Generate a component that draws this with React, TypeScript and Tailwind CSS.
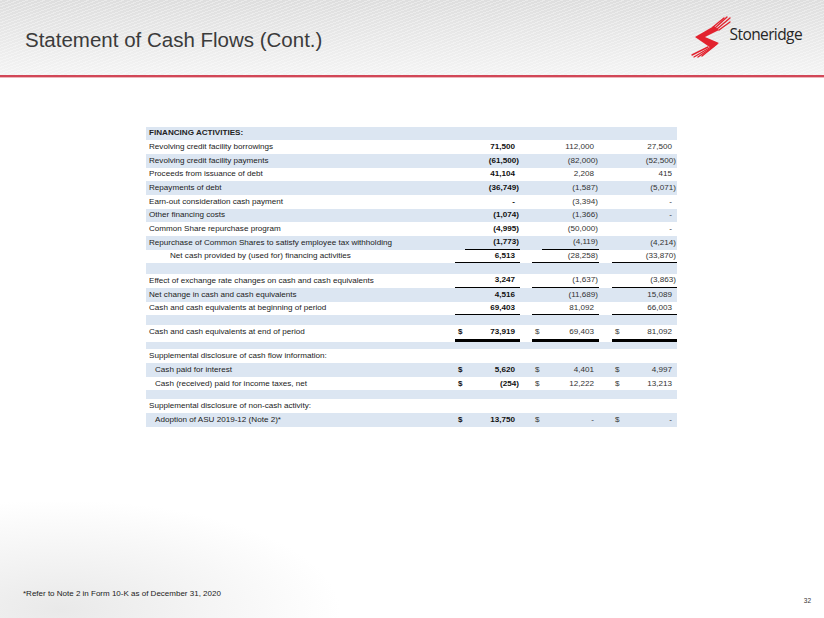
import React from 'react';

type Line = 'none' | 'thin' | 'narrow' | 'thick';

type Row = {
  label?: string;
  blue?: boolean;
  bold?: boolean;
  indent?: number;
  vals?: [string, string, string];
  dollar?: boolean;
  lines?: [Line, Line, Line];
  h?: string;
};

const rows: Row[] = [
  { label: 'FINANCING ACTIVITIES:', blue: true, bold: true },
  { label: 'Revolving credit facility borrowings', vals: ['71,500', '112,000', '27,500'] },
  { label: 'Revolving credit facility payments', blue: true, vals: ['(61,500)', '(82,000)', '(52,500)'] },
  { label: 'Proceeds from issuance of debt', vals: ['41,104', '2,208', '415'] },
  { label: 'Repayments of debt', blue: true, vals: ['(36,749)', '(1,587)', '(5,071)'] },
  { label: 'Earn-out consideration cash payment', vals: ['-', '(3,394)', '-'] },
  { label: 'Other financing costs', blue: true, vals: ['(1,074)', '(1,366)', '-'] },
  { label: 'Common Share repurchase program', vals: ['(4,995)', '(50,000)', '-'] },
  {
    label: 'Repurchase of Common Shares to satisfy employee tax withholding',
    blue: true,
    vals: ['(1,773)', '(4,119)', '(4,214)'],
    lines: ['narrow', 'narrow', 'none'],
  },
  {
    label: 'Net cash provided by (used for) financing activities',
    indent: 1,
    vals: ['6,513', '(28,258)', '(33,870)'],
    lines: ['thin', 'thin', 'thin'],
  },
  { blue: true, h: 'h-[10.8px]' },
  {
    label: 'Effect of exchange rate changes on cash and cash equivalents',
    vals: ['3,247', '(1,637)', '(3,863)'],
    lines: ['thin', 'thin', 'thin'],
  },
  { label: 'Net change in cash and cash equivalents', blue: true, vals: ['4,516', '(11,689)', '15,089'] },
  {
    label: 'Cash and cash equivalents at beginning of period',
    vals: ['69,403', '81,092', '66,003'],
    lines: ['thin', 'thin', 'thin'],
  },
  { blue: true, h: 'h-[10px]' },
  {
    label: 'Cash and cash equivalents at end of period',
    vals: ['73,919', '69,403', '81,092'],
    dollar: true,
    lines: ['thick', 'thick', 'thick'],
    h: 'h-[16.7px]',
  },
  { blue: true, h: 'h-[7.5px]' },
  { label: 'Supplemental disclosure of cash flow information:' },
  { label: 'Cash paid for interest', indent: 2, blue: true, vals: ['5,620', '4,401', '4,997'], dollar: true },
  { label: 'Cash (received) paid for income taxes, net', indent: 2, vals: ['(254)', '12,222', '13,213'], dollar: true },
  { blue: true, h: 'h-[8.9px]' },
  { label: 'Supplemental disclosure of non-cash activity:' },
  { label: 'Adoption of ASU 2019-12 (Note 2)*', indent: 2, blue: true, vals: ['13,750', '-', '-'], dollar: true },
];

const lineCls: Record<Line, string> = {
  none: '',
  thin: 'border-b border-black',
  narrow: 'border-b border-black ml-[10px]',
  thick: 'border-b-[3px] border-black',
};

const ValueCell = ({ v, dollar, line, first }: { v: string; dollar?: boolean; line: Line; first: boolean }) => {
  const paren = v.endsWith(')');
  return (
    <div className={`flex h-full items-center justify-between ${lineCls[line]} ${first ? 'font-bold text-[#111]' : 'text-[#333]'}`}>
      <span className={line === 'narrow' ? 'pl-0' : 'pl-[3px]'}>{dollar ? '$' : ''}</span>
      <span className="flex pr-[1px]">
        {v}
        {!paren && <span className="inline-block w-[4px]" />}
      </span>
    </div>
  );
};

const Logo = () => (
  <svg width="40" height="43" viewBox="0 0 40 43" className="shrink-0">
    <g stroke="#e2222e" strokeWidth="1.4" strokeLinecap="round">
      <line x1="22" y1="12" x2="33" y2="3" />
      <line x1="24" y1="13" x2="36" y2="2" />
      <line x1="26" y1="14" x2="39" y2="3" />
      <line x1="28" y1="15" x2="39" y2="7" />
      <line x1="17" y1="32" x2="1" y2="40" />
      <line x1="20" y1="32" x2="3" y2="42" />
      <line x1="23" y1="31" x2="7" y2="42" />
      <line x1="26" y1="29" x2="11" y2="41" />
    </g>
    <path d="M23 11 L28 15 L14 22 L28 28 L20 33 L4 22 Z" fill="#e2222e" />
  </svg>
);

export default function App() {
  return (
    <div className="flex h-[618px] w-[824px] flex-col overflow-hidden bg-[radial-gradient(ellipse_280px_110px_at_60px_610px,#e9e9e9,#ffffff)] font-['Liberation_Sans',Arial,sans-serif]">
      <header className="flex h-[75px] shrink-0 items-start justify-between bg-[repeating-linear-gradient(160deg,rgba(255,255,255,0.35)_0px,rgba(255,255,255,0.35)_1px,transparent_1px,transparent_3px),linear-gradient(180deg,#dedede,#f4f4f4)]">
        <h1 className="pl-[25px] pt-[28px] text-[20.5px] leading-[24px] text-[#3b3b3b]">Statement of Cash Flows (Cont.)</h1>
        <div className="flex items-start pr-[22px] pt-[15px]">
          <Logo />
          <span className="-ml-[1px] pt-[9px] font-['Open_Sans',sans-serif] text-[15.5px] leading-[20px] tracking-[-0.6px] text-[#262626]">
            Stoneridge
          </span>
        </div>
      </header>
      <div className="h-[2px] shrink-0 bg-[#d24757]" />
      <div className="h-[1px] shrink-0 bg-[#ecb8bd]" />

      <div className="ml-[146px] mt-[48.5px] w-[531px] text-[8.1px] text-[#222]">
        {rows.map((r, i) => (
          <div
            key={i}
            className={`grid grid-cols-[309px_65px_12px_67px_13px_65px] ${r.h ?? 'h-[13.7px]'} ${r.blue ? 'bg-[#dce6f2]' : ''}`}
          >
            <div
              className={`flex items-center whitespace-nowrap ${r.bold ? 'font-bold' : ''} ${
                r.indent === 1 ? 'pl-[24px]' : r.indent === 2 ? 'pl-[9px]' : 'pl-[3px]'
              } ${r.lines?.[0] === 'thick' ? 'pb-[3px]' : ''}`}
            >
              {r.label}
            </div>
            {r.vals ? (
              <>
                <ValueCell v={r.vals[0]} dollar={r.dollar} line={r.lines?.[0] ?? 'none'} first />
                <div />
                <ValueCell v={r.vals[1]} dollar={r.dollar} line={r.lines?.[1] ?? 'none'} first={false} />
                <div />
                <ValueCell v={r.vals[2]} dollar={r.dollar} line={r.lines?.[2] ?? 'none'} first={false} />
              </>
            ) : null}
          </div>
        ))}
      </div>

      <div className="flex-1" />
      <footer className="flex items-end justify-between pb-[13px] pl-[23px] pr-[13px]">
        <p className="mb-[6px] text-[8px] leading-[10px] text-[#222]">*Refer to Note 2 in Form 10-K as of December 31, 2020</p>
        <span className="text-[6.5px] leading-[8px] text-[#333]">32</span>
      </footer>
    </div>
  );
}
